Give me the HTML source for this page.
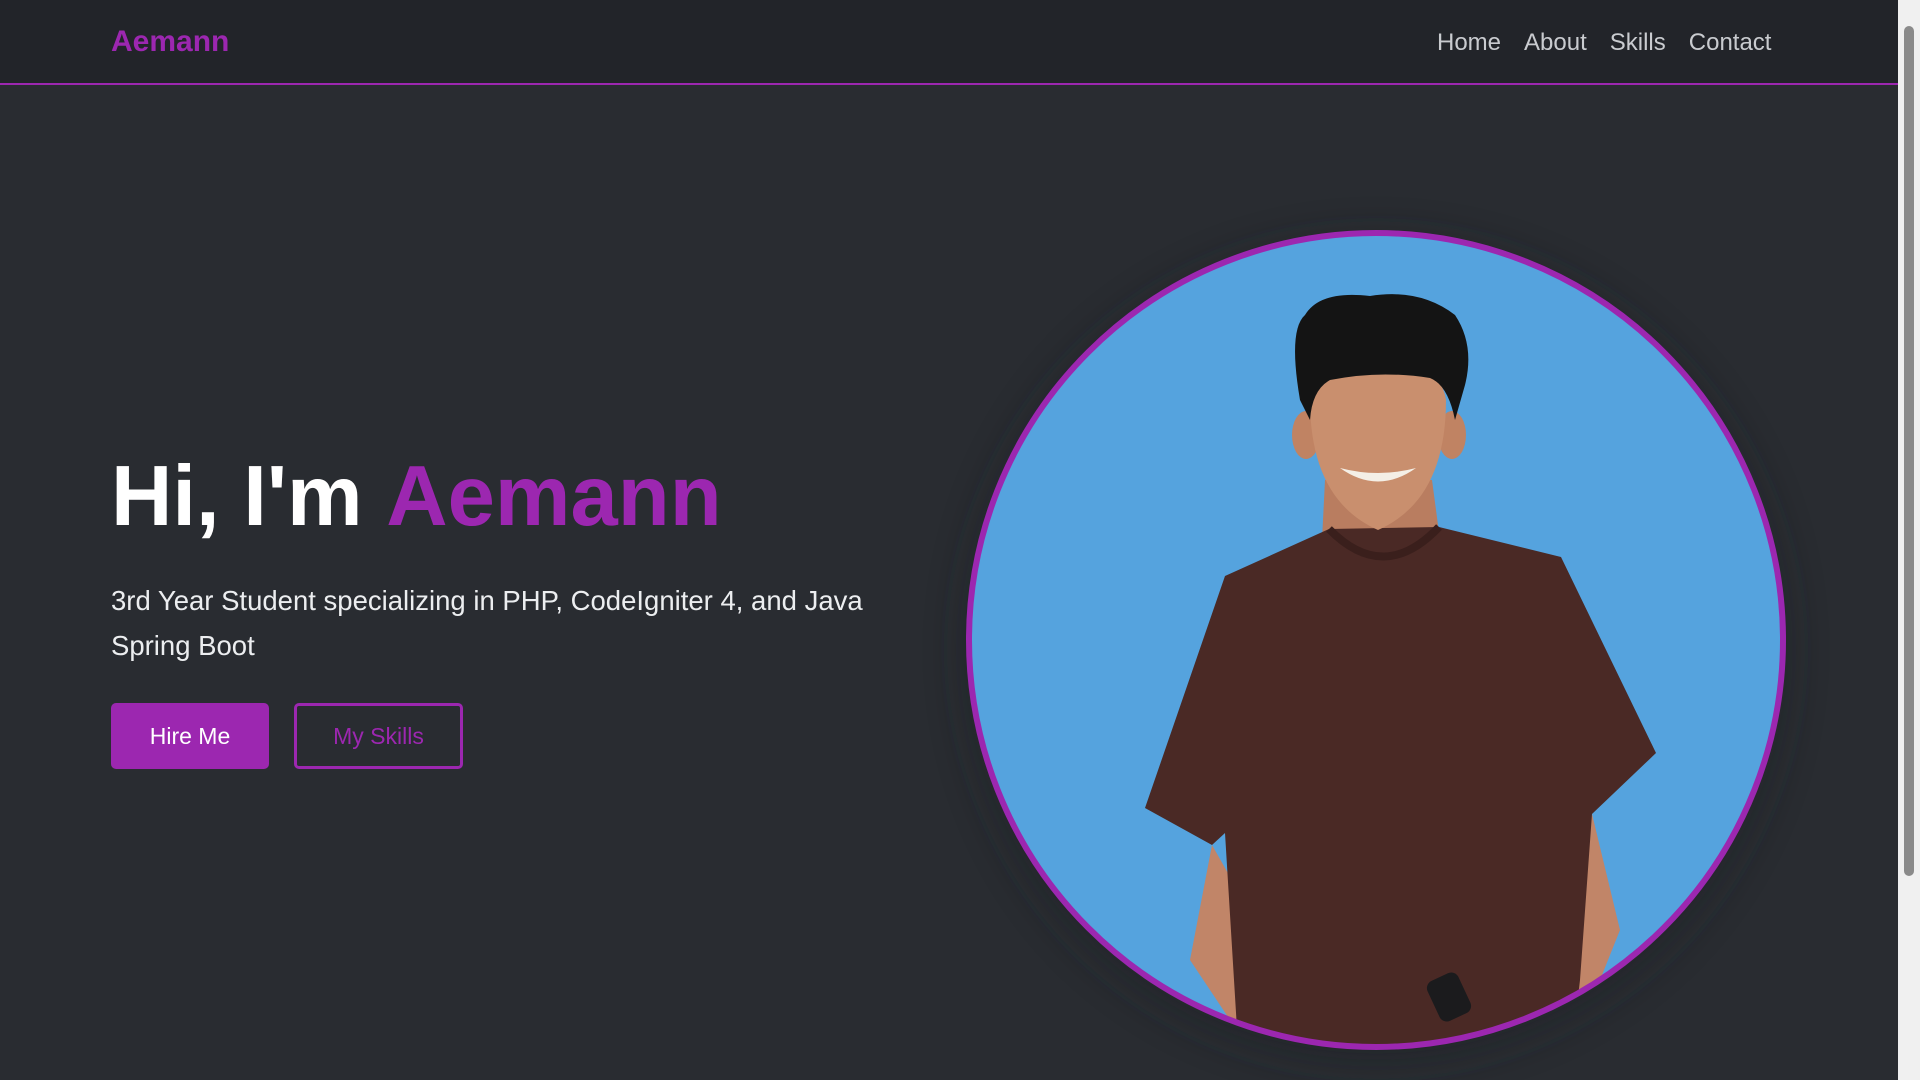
<!DOCTYPE html>
<html><head><meta charset="utf-8"><style>
*{margin:0;padding:0;box-sizing:border-box}
body{width:1920px;height:1080px;overflow:hidden;background:#292c31;font-family:"Liberation Sans",sans-serif;position:relative}
.nav{position:absolute;left:0;top:0;width:1898px;height:85px;background:#222429;border-bottom:2px solid #9c27b0}
.brand{position:absolute;left:111px;top:25px;font-size:30px;font-weight:bold;color:#9c27b0}
.links{position:absolute;top:29px;left:1437px;font-size:24px;color:#c9cbcf;white-space:nowrap}
.links span{margin-right:23px}
h1{position:absolute;left:111px;top:454px;font-size:85px;font-weight:bold;color:#fff;white-space:nowrap;line-height:1}
h1 b{color:#9c27b0}
.sub{position:absolute;left:111px;top:578px;width:800px;font-size:27.5px;line-height:45px;color:#eceef0}
.btn{position:absolute;top:703px;height:66px;border-radius:5px;font-size:23px;display:flex;align-items:center;justify-content:center}
.b1{left:111px;width:158px;background:#9c27b0;color:#fff}
.b2{left:294px;width:169px;border:3px solid #9c27b0;color:#9c27b0}
.sb{position:absolute;right:0;top:0;width:22px;height:1080px;background:#f0f0f0}
.sb i{position:absolute;left:6px;top:26px;width:10px;height:850px;background:#8a8a8a;border-radius:5px}
</style></head><body>
<div class="nav"><div class="brand">Aemann</div><div class="links"><span>Home</span><span>About</span><span>Skills</span><span>Contact</span></div></div>
<h1>Hi, I'm <b>Aemann</b></h1>
<div class="sub">3rd Year Student specializing in PHP, CodeIgniter 4, and Java Spring Boot</div>
<div class="btn b1">Hire Me</div><div class="btn b2">My Skills</div>
<svg style="position:absolute;left:0;top:0" width="1898" height="1080">
<defs><clipPath id="c"><circle cx="1376" cy="640" r="406"/></clipPath>
<filter id="s"><feGaussianBlur stdDeviation="20"/></filter></defs>
<circle cx="1376" cy="650" r="410" fill="#1e2025" filter="url(#s)" opacity=".6"/>
<g clip-path="url(#c)">
<rect x="960" y="220" width="840" height="840" fill="#55a3de"/>
<path d="M1212 845 L1300 1000 L1390 1040 L1370 1080 L1270 1080 L1190 960 Z" fill="#c18568"/>
<path d="M1592 814 L1560 950 L1470 1030 L1480 1080 L1560 1080 L1620 930 Z" fill="#c18568"/>
<path d="M1325 480 L1432 480 L1440 540 L1380 575 L1322 540 Z" fill="#b97d60"/>
<path d="M1329 529 L1439 527 L1561 557 L1656 753 L1592 814 L1580 980 L1573 1041 L1510 1080 L1300 1080 L1237 1029 L1225 833 L1212 845 L1145 808 L1225 576 Z" fill="#4a2925"/>
<path d="M1329 529 Q1384 585 1439 527" stroke="#3a1f1c" stroke-width="8" fill="none"/>
<ellipse cx="1306" cy="435" rx="14" ry="24" fill="#c08363"/>
<ellipse cx="1452" cy="435" rx="14" ry="24" fill="#c08363"/>
<path d="M1310 400 Q1310 500 1378 530 Q1446 500 1446 400 Q1440 360 1378 360 Q1316 360 1310 400Z" fill="#c98f6e"/>
<path d="M1300 400 Q1288 330 1305 315 Q1320 290 1370 296 Q1420 288 1455 315 Q1475 345 1465 385 L1455 420 Q1448 385 1430 378 Q1380 370 1330 380 Q1312 390 1310 420 Z" fill="#141414"/>
<path d="M1340 468 Q1378 495 1416 468 Q1378 478 1340 468Z" fill="#f4efe6"/>
<rect x="1432" y="975" width="34" height="44" rx="8" fill="#1b1b1d" transform="rotate(-25 1449 997)"/>
</g>
<circle cx="1376" cy="640" r="407" fill="none" stroke="#9c27b0" stroke-width="6"/>
</svg>
<div class="sb"><i></i></div>
</body></html>
